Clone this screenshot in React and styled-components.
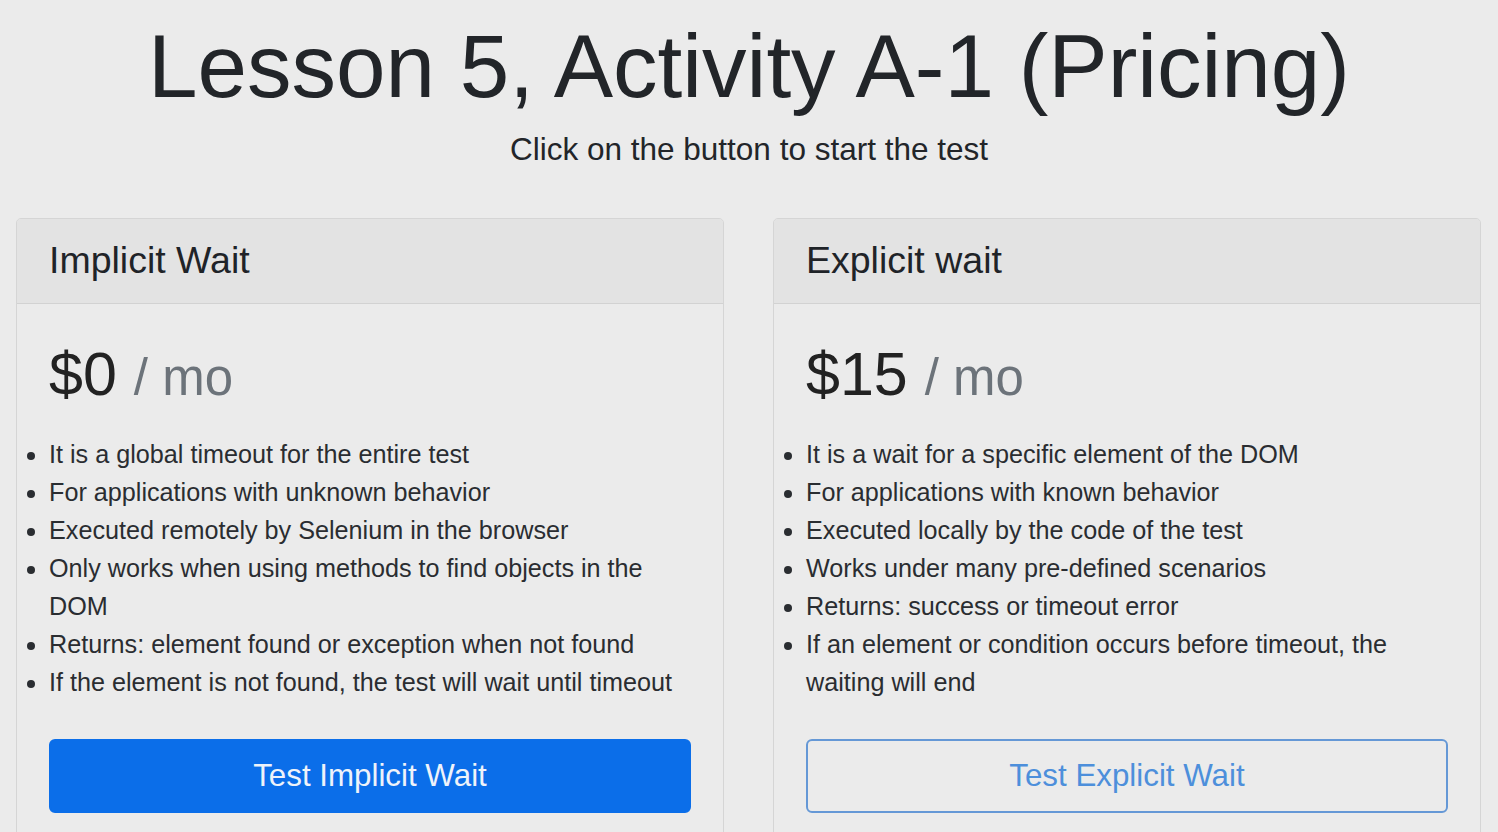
import styled, { createGlobalStyle } from "styled-components";

const GlobalStyle = createGlobalStyle`
    html, body {
        margin: 0;
        padding: 0;
        background: #ebebeb;
        font-family: "Liberation Sans", Arial, sans-serif;
        color: #222529;
    }
`;

const plans = [
    {
        title: "Implicit Wait",
        price: "$0",
        features: [
            "It is a global timeout for the entire test",
            "For applications with unknown behavior",
            "Executed remotely by Selenium in the browser",
            "Only works when using methods to find objects in the DOM",
            "Returns: element found or exception when not found",
            "If the element is not found, the test will wait until timeout",
        ],
        button: "Test Implicit Wait",
        primary: true,
    },
    {
        title: "Explicit wait",
        price: "$15",
        features: [
            "It is a wait for a specific element of the DOM",
            "For applications with known behavior",
            "Executed locally by the code of the test",
            "Works under many pre-defined scenarios",
            "Returns: success or timeout error",
            "If an element or condition occurs before timeout, the waiting will end",
        ],
        button: "Test Explicit Wait",
        primary: false,
    },
];

export default function App() {
    return (
        <Page>
            <GlobalStyle />
            <Intro>
                <h1>Lesson 5, Activity A-1 (Pricing)</h1>
                <p>Click on the button to start the test</p>
            </Intro>
            <Deck>
                {plans.map((plan) => (
                    <Card key={plan.title}>
                        <CardHeader>{plan.title}</CardHeader>
                        <CardBody>
                            <Price>
                                {plan.price} <small>/ mo</small>
                            </Price>
                            <Features>
                                {plan.features.map((f) => (
                                    <li key={f}>{f}</li>
                                ))}
                            </Features>
                            <Button type="button" $primary={plan.primary}>
                                {plan.button}
                            </Button>
                        </CardBody>
                    </Card>
                ))}
            </Deck>
        </Page>
    );
}

const Page = styled.div`
    padding-top: 13px;
    min-height: 832px;
    box-sizing: border-box;
`;

const Intro = styled.div`
    text-align: center;
    h1 {
        margin: 0;
        font-size: 89px;
        font-weight: 400;
        line-height: 1.2;
    }
    p {
        margin: 6px 0 0;
        font-size: 31.5px;
        line-height: 1.5;
    }
`;

const Deck = styled.div`
    display: grid;
    grid-template-columns: 708px 708px;
    gap: 49px;
    padding: 0 17px 0 16px;
    margin-top: 45px;
`;

const Card = styled.div`
    border: 1px solid #d5d5d5;
    border-radius: 5px;
    background: #ebebeb;
    overflow: hidden;
`;

const CardHeader = styled.div`
    height: 82px;
    display: flex;
    align-items: center;
    padding: 0 32px 2px;
    background: #e3e3e3;
    border-bottom: 1px solid #d2d2d2;
    font-size: 37.5px;
    color: #1f2328;
`;

const CardBody = styled.div`
    padding: 32px;
`;

const Price = styled.div`
    font-size: 61px;
    line-height: 77px;
    color: #222;
    margin-bottom: 19px;
    small {
        font-size: 51px;
        color: #6c737a;
    }
`;

const Features = styled.ul`
    margin: 0 0 38px;
    padding: 0;
    font-size: 25.2px;
    line-height: 38px;
    color: #2a2d31;
`;

const Button = styled.button`
    display: block;
    width: 100%;
    height: 74px;
    border-radius: 6px;
    font-family: "Liberation Sans", Arial, sans-serif;
    font-size: 31.3px;
    cursor: pointer;
    background: ${(p) => (p.$primary ? "#0b6ee9" : "transparent")};
    color: ${(p) => (p.$primary ? "#eef3fa" : "#4d8fdb")};
    border: 2px solid ${(p) => (p.$primary ? "#0b6ee9" : "#6598d6")};
`;
